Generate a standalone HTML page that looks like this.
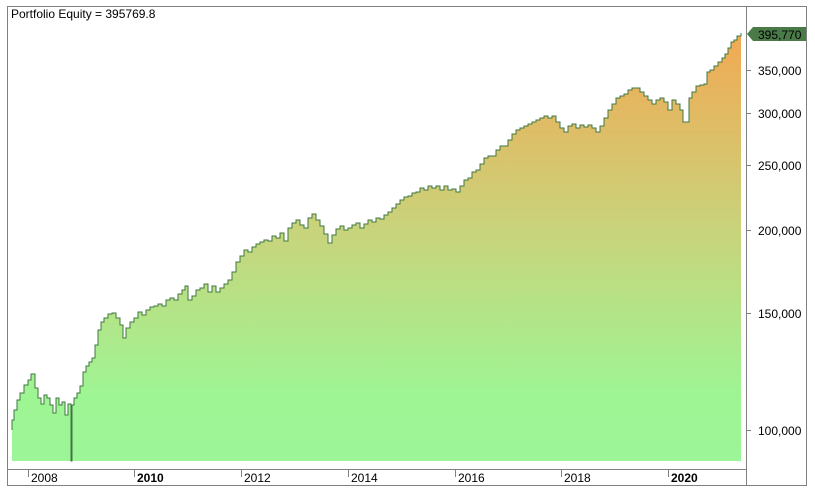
<!DOCTYPE html>
<html><head><style>
html,body{margin:0;padding:0;background:#fff;width:815px;height:494px;overflow:hidden}
svg{display:block}
text{font-family:"Liberation Sans",Arial,sans-serif;font-size:12px;fill:#000}
</style></head><body>
<svg width="815" height="494" viewBox="0 0 815 494">
<defs>
<linearGradient id="g" gradientUnits="userSpaceOnUse" x1="0" y1="30" x2="0" y2="461">
<stop offset="0" stop-color="#f2a852"/>
<stop offset="0.45" stop-color="#cad27a"/>
<stop offset="0.85" stop-color="#9ef594"/>
<stop offset="1" stop-color="#9cf596"/>
</linearGradient>
</defs>
<rect x="7.5" y="6.5" width="799" height="479" fill="none" stroke="#808080"/>
<line x1="746.5" y1="6" x2="746.5" y2="486" stroke="#808080"/>
<line x1="7" y1="469.5" x2="746" y2="469.5" stroke="#808080"/>
<path d="M12,430 L12,420 14,420 14,410 17,410 17,400 20,400 20,393 24,393 24,385 28,385 28,380 31,380 31,374 35,374 35,388 38,388 38,398 41,398 41,404 44,404 44,395 47,395 47,398 50,398 50,405 53,405 53,413 56,413 56,398 59,398 59,405 62,405 62,402 65,402 65,415 68,415 68,404 71,404 71,461 72,461 72,405 74,405 74,398 77,398 77,393 80,393 80,386 83,386 83,372 86,372 86,366 89,366 89,362 92,362 92,358 95,358 95,345 98,345 98,330 101,330 101,322 104,322 104,318 108,318 108,314 112,314 112,313 116,313 116,318 120,318 120,325 123,325 123,338 126,338 126,328 130,328 130,322 134,322 134,318 138,318 138,312 142,312 142,315 146,315 146,310 150,310 150,307 154,307 154,306 158,306 158,304 162,304 162,306 166,306 166,300 170,300 170,298 174,298 174,300 178,300 178,294 182,294 182,290 185,290 185,286 188,286 188,300 192,300 192,296 196,296 196,290 200,290 200,288 204,288 204,284 208,284 208,292 212,292 212,286 216,286 216,292 220,292 220,288 224,288 224,284 228,284 228,280 232,280 232,272 236,272 236,262 240,262 240,256 244,256 244,250 248,250 248,252 252,252 252,247 256,247 256,244 260,244 260,242 264,242 264,240 268,240 268,241 272,241 272,236 276,236 276,238 280,238 280,233 284,233 284,241 288,241 288,228 292,228 292,223 296,223 296,220 300,220 300,225 304,225 304,228 308,228 308,218 312,218 312,214 316,214 316,220 320,220 320,226 324,226 324,234 328,234 328,243 332,243 332,235 336,235 336,229 340,229 340,226 344,226 344,230 348,230 348,228 352,228 352,225 356,225 356,223 360,223 360,228 364,228 364,224 368,224 368,220 372,220 372,222 376,222 376,218 380,218 380,219 384,219 384,215 388,215 388,212 392,212 392,208 396,208 396,204 400,204 400,200 404,200 404,197 408,197 408,196 412,196 412,193 416,193 416,192 420,192 420,188 424,188 424,190 428,190 428,186 432,186 432,188 436,188 436,186 440,186 440,190 444,190 444,186 448,186 448,190 452,190 452,189 456,189 456,192 460,192 460,186 464,186 464,180 468,180 468,178 472,178 472,172 476,172 476,170 480,170 480,164 484,164 484,158 488,158 488,156 496,156 496,150 500,150 500,146 508,146 508,140 512,140 512,134 516,134 516,130 520,130 520,128 524,128 524,126 528,126 528,124 532,124 532,122 536,122 536,120 540,120 540,118 544,118 544,116 548,116 548,118 552,118 552,116 556,116 556,122 560,122 560,128 564,128 564,132 568,132 568,126 572,126 572,124 576,124 576,128 580,128 580,125 584,125 584,127 588,127 588,125 592,125 592,128 596,128 596,132 600,132 600,126 604,126 604,118 608,118 608,110 612,110 612,104 616,104 616,98 620,98 620,96 624,96 624,94 628,94 628,90 632,90 632,88 640,88 640,92 644,92 644,96 648,96 648,100 652,100 652,104 656,104 656,100 660,100 660,98 664,98 664,102 668,102 668,110 672,110 672,100 676,100 676,104 680,104 680,110 683,110 683,122 689,122 689,98 692,98 692,92 696,92 696,86 700,86 700,85 704,85 704,84 707,84 707,72 710,72 710,70 714,70 714,66 718,66 718,62 722,62 722,58 725,58 725,54 728,54 728,48 731,48 731,42 734,42 734,40 737,40 737,36 741,36 741,461 12,461 Z" fill="url(#g)" stroke="none"/>
<path d="M12,430 L12,420 14,420 14,410 17,410 17,400 20,400 20,393 24,393 24,385 28,385 28,380 31,380 31,374 35,374 35,388 38,388 38,398 41,398 41,404 44,404 44,395 47,395 47,398 50,398 50,405 53,405 53,413 56,413 56,398 59,398 59,405 62,405 62,402 65,402 65,415 68,415 68,404 71,404 71,461 72,461 72,405 74,405 74,398 77,398 77,393 80,393 80,386 83,386 83,372 86,372 86,366 89,366 89,362 92,362 92,358 95,358 95,345 98,345 98,330 101,330 101,322 104,322 104,318 108,318 108,314 112,314 112,313 116,313 116,318 120,318 120,325 123,325 123,338 126,338 126,328 130,328 130,322 134,322 134,318 138,318 138,312 142,312 142,315 146,315 146,310 150,310 150,307 154,307 154,306 158,306 158,304 162,304 162,306 166,306 166,300 170,300 170,298 174,298 174,300 178,300 178,294 182,294 182,290 185,290 185,286 188,286 188,300 192,300 192,296 196,296 196,290 200,290 200,288 204,288 204,284 208,284 208,292 212,292 212,286 216,286 216,292 220,292 220,288 224,288 224,284 228,284 228,280 232,280 232,272 236,272 236,262 240,262 240,256 244,256 244,250 248,250 248,252 252,252 252,247 256,247 256,244 260,244 260,242 264,242 264,240 268,240 268,241 272,241 272,236 276,236 276,238 280,238 280,233 284,233 284,241 288,241 288,228 292,228 292,223 296,223 296,220 300,220 300,225 304,225 304,228 308,228 308,218 312,218 312,214 316,214 316,220 320,220 320,226 324,226 324,234 328,234 328,243 332,243 332,235 336,235 336,229 340,229 340,226 344,226 344,230 348,230 348,228 352,228 352,225 356,225 356,223 360,223 360,228 364,228 364,224 368,224 368,220 372,220 372,222 376,222 376,218 380,218 380,219 384,219 384,215 388,215 388,212 392,212 392,208 396,208 396,204 400,204 400,200 404,200 404,197 408,197 408,196 412,196 412,193 416,193 416,192 420,192 420,188 424,188 424,190 428,190 428,186 432,186 432,188 436,188 436,186 440,186 440,190 444,190 444,186 448,186 448,190 452,190 452,189 456,189 456,192 460,192 460,186 464,186 464,180 468,180 468,178 472,178 472,172 476,172 476,170 480,170 480,164 484,164 484,158 488,158 488,156 496,156 496,150 500,150 500,146 508,146 508,140 512,140 512,134 516,134 516,130 520,130 520,128 524,128 524,126 528,126 528,124 532,124 532,122 536,122 536,120 540,120 540,118 544,118 544,116 548,116 548,118 552,118 552,116 556,116 556,122 560,122 560,128 564,128 564,132 568,132 568,126 572,126 572,124 576,124 576,128 580,128 580,125 584,125 584,127 588,127 588,125 592,125 592,128 596,128 596,132 600,132 600,126 604,126 604,118 608,118 608,110 612,110 612,104 616,104 616,98 620,98 620,96 624,96 624,94 628,94 628,90 632,90 632,88 640,88 640,92 644,92 644,96 648,96 648,100 652,100 652,104 656,104 656,100 660,100 660,98 664,98 664,102 668,102 668,110 672,110 672,100 676,100 676,104 680,104 680,110 683,110 683,122 689,122 689,98 692,98 692,92 696,92 696,86 700,86 700,85 704,85 704,84 707,84 707,72 710,72 710,70 714,70 714,66 718,66 718,62 722,62 722,58 725,58 725,54 728,54 728,48 731,48 731,42 734,42 734,40 737,40 737,36 741,36 741,33" fill="none" stroke="#3f7740" stroke-width="1" shape-rendering="crispEdges"/>
<text x="11" y="18">Portfolio Equity = 395769.8</text>
<g stroke="#808080">
<line x1="746" y1="70.5" x2="751" y2="70.5"/>
<line x1="746" y1="113.5" x2="751" y2="113.5"/>
<line x1="746" y1="165.5" x2="751" y2="165.5"/>
<line x1="746" y1="230.5" x2="751" y2="230.5"/>
<line x1="746" y1="313.5" x2="751" y2="313.5"/>
<line x1="746" y1="430.5" x2="751" y2="430.5"/>
<line x1="28.5" y1="470" x2="28.5" y2="477"/>
<line x1="134.5" y1="470" x2="134.5" y2="477"/>
<line x1="241.5" y1="470" x2="241.5" y2="477"/>
<line x1="348.5" y1="470" x2="348.5" y2="477"/>
<line x1="455.5" y1="470" x2="455.5" y2="477"/>
<line x1="561.5" y1="470" x2="561.5" y2="477"/>
<line x1="668.5" y1="470" x2="668.5" y2="477"/>
</g>
<text x="758" y="75">350,000</text>
<text x="758" y="118">300,000</text>
<text x="758" y="170">250,000</text>
<text x="758" y="235">200,000</text>
<text x="758" y="318">150,000</text>
<text x="758" y="435">100,000</text>
<polygon points="747,34 753,27 806,27 806,41 753,41" fill="#4a7a48"/>
<text x="758" y="39">395,770</text>
<text x="31" y="482">2008</text>
<text x="137" y="482" font-weight="bold">2010</text>
<text x="244" y="482">2012</text>
<text x="351" y="482">2014</text>
<text x="458" y="482">2016</text>
<text x="564" y="482">2018</text>
<text x="671" y="482" font-weight="bold">2020</text>
</svg>
</body></html>
